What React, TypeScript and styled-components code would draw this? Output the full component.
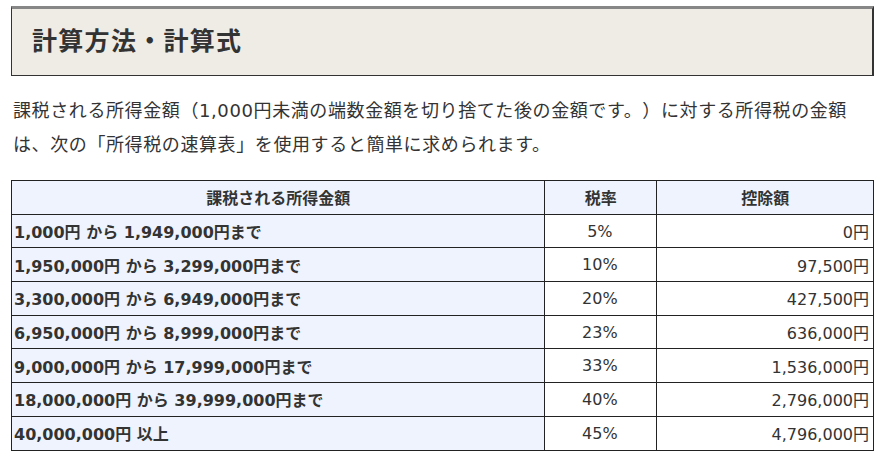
import * as React from "react";
import styled, { createGlobalStyle } from "styled-components";

const GlobalStyle = createGlobalStyle`
    body {
        margin: 0;
        background: #fff;
        color: #333;
        font-family: "DejaVu Sans", "Noto Sans CJK JP", sans-serif;
        text-spacing-trim: space-all;
    }
`;

const Page = styled.div`
    padding: 6px 4px 0 11px;
`;

const Heading = styled.h2`
    margin: 0;
    height: 70px;
    box-sizing: border-box;
    display: flex;
    align-items: center;
    padding: 0 0 6px 20px;
    background: #efece6;
    border: 1px solid #333;
    border-top: 3px solid #878787;
    border-right-width: 2px;
    font-family: "Noto Sans CJK JP", sans-serif;
    font-size: 25px;
    font-weight: bold;
    color: #333;
    letter-spacing: 1.3px;
`;

const Lead = styled.p`
    margin: 18px 0 18px 2px;
    font-size: 18px;
    line-height: 34px;
    letter-spacing: 0.6px;
    color: #333;
`;

const Table = styled.table`
    width: 863px;
    border-collapse: collapse;
    font-size: 16px;
    color: #333;
`;

const Th = styled.th`
    height: 32.7px;
    padding: 0 2px;
    border: 1px solid #222;
    background: #eef3fd;
    font-weight: bold;
    text-align: center;
`;

const Td = styled.td<{ $align?: "left" | "center" | "right"; $label?: boolean }>`
    height: 32.7px;
    padding: 0 4px 0 2px;
    border: 1px solid #222;
    background: ${p => (p.$label ? "#eef3fd" : "#fff")};
    font-weight: ${p => (p.$label ? "bold" : "normal")};
    text-align: ${p => p.$align ?? "left"};
    white-space: nowrap;
`;

const rows = [
    ["1,000円 から 1,949,000円まで", "5%", "0円"],
    ["1,950,000円 から 3,299,000円まで", "10%", "97,500円"],
    ["3,300,000円 から 6,949,000円まで", "20%", "427,500円"],
    ["6,950,000円 から 8,999,000円まで", "23%", "636,000円"],
    ["9,000,000円 から 17,999,000円まで", "33%", "1,536,000円"],
    ["18,000,000円 から 39,999,000円まで", "40%", "2,796,000円"],
    ["40,000,000円 以上", "45%", "4,796,000円"],
];

const App: React.FC = () => {
    return (
        <Page>
            <GlobalStyle />
            <Heading>計算方法・計算式</Heading>
            <Lead>
                課税される所得金額（1,000円未満の端数金額を切り捨てた後の金額です。）に対する所得税の金額は、次の「所得税の速算表」を使用すると簡単に求められます。
            </Lead>
            <Table>
                <colgroup>
                    <col style={{ width: 534 }} />
                    <col style={{ width: 112 }} />
                    <col style={{ width: 217 }} />
                </colgroup>
                <thead>
                    <tr>
                        <Th>課税される所得金額</Th>
                        <Th>税率</Th>
                        <Th>控除額</Th>
                    </tr>
                </thead>
                <tbody>
                    {rows.map(([range, rate, deduction]) => (
                        <tr key={range}>
                            <Td $label>{range}</Td>
                            <Td $align="center">{rate}</Td>
                            <Td $align="right">{deduction}</Td>
                        </tr>
                    ))}
                </tbody>
            </Table>
        </Page>
    );
};

export default App;
